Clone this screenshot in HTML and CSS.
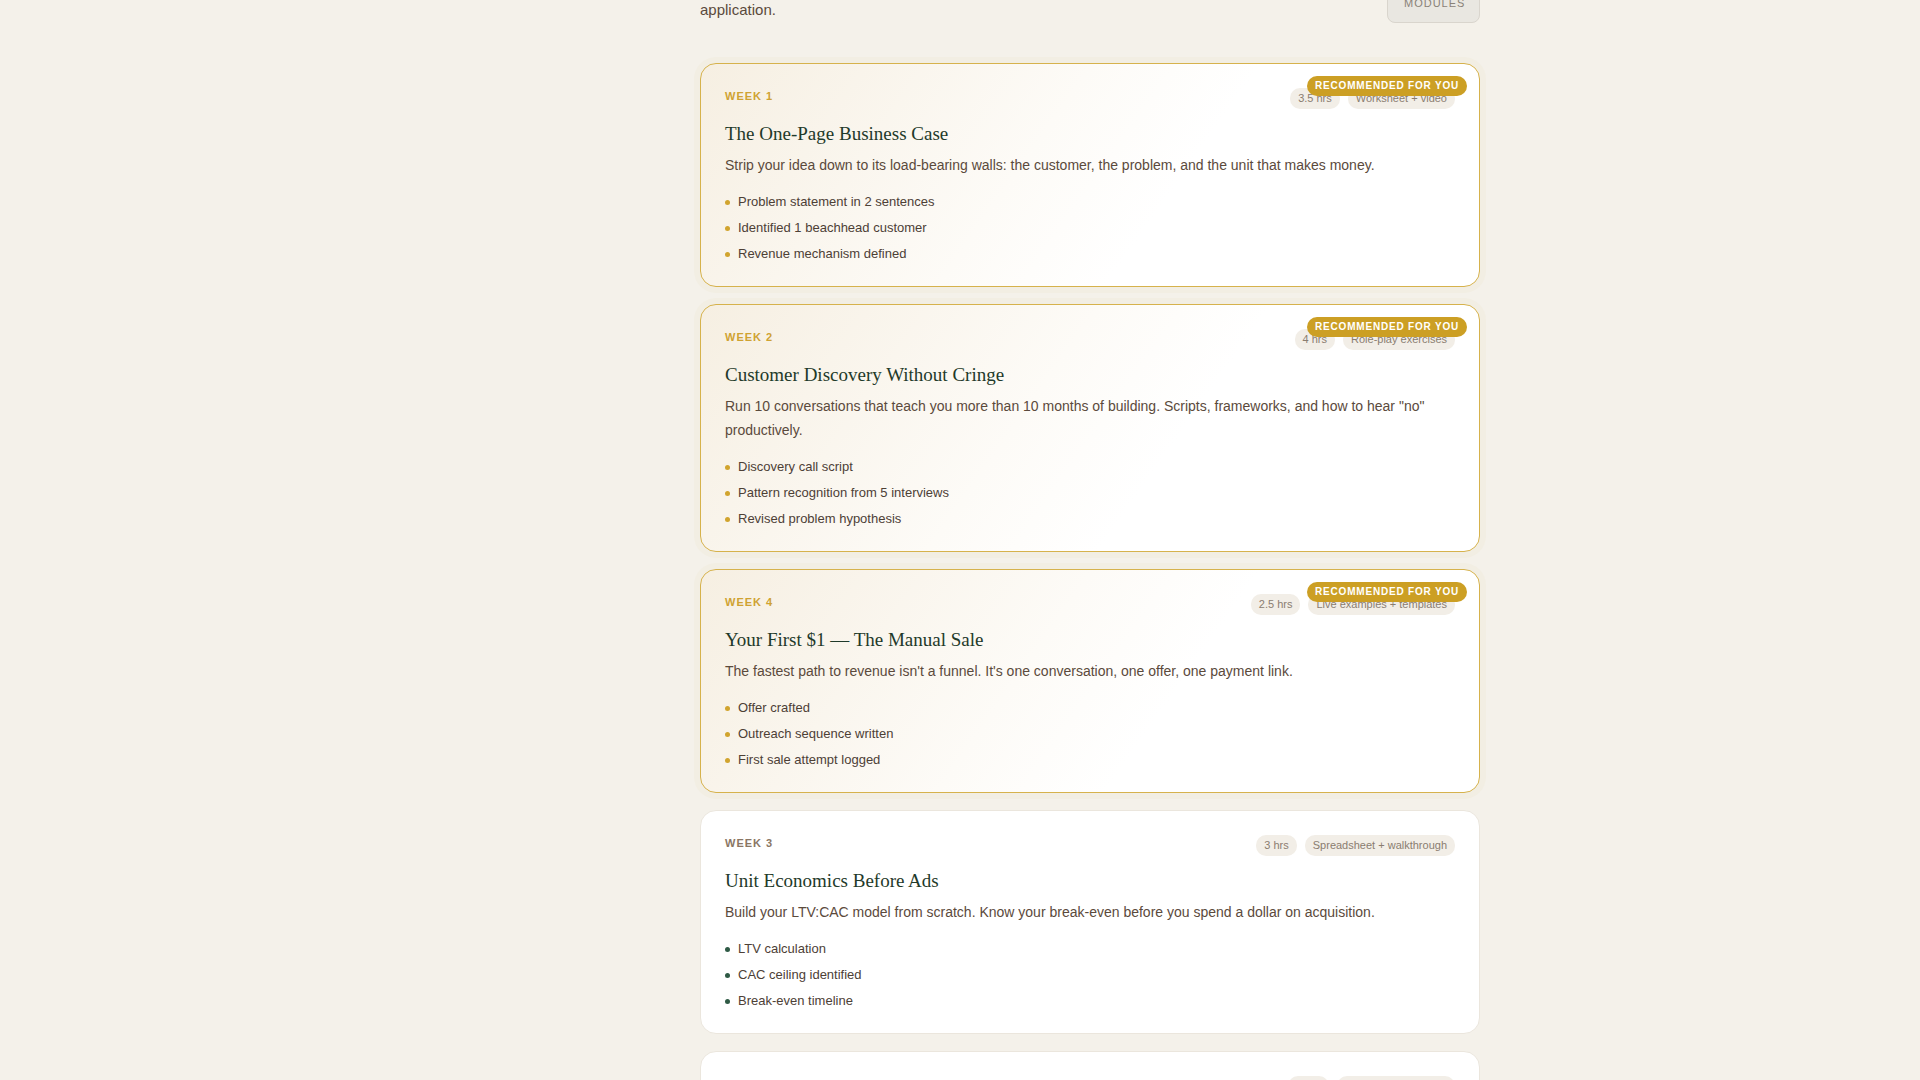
FILE: index.html
```html
<!DOCTYPE html>
<html lang="en">
<head>
<meta charset="utf-8">
<title>Curriculum — Modules</title>
<link rel="stylesheet" href="styles.css">
</head>
<body>
<div class="page">
  <main class="main">
    <header class="intro">
      <p class="intro-text">Each module ends with a concrete deliverable you can drop straight into your accelerator<br>application.</p>
      <button class="modules-btn" type="button">View all<br>modules</button>
    </header>

    <section class="modules">
      <article class="card card--rec">
        <span class="badge">Recommended for you</span>
        <div class="card-head">
          <span class="week">Week 1</span>
          <div class="chips"><span class="chip">3.5 hrs</span><span class="chip">Worksheet + video</span></div>
        </div>
        <h3 class="card-title">The One-Page Business Case</h3>
        <p class="card-desc">Strip your idea down to its load-bearing walls: the customer, the problem, and the unit that makes money.</p>
        <ul class="outcomes">
          <li>Problem statement in 2 sentences</li>
          <li>Identified 1 beachhead customer</li>
          <li>Revenue mechanism defined</li>
        </ul>
      </article>

      <article class="card card--rec">
        <span class="badge">Recommended for you</span>
        <div class="card-head">
          <span class="week">Week 2</span>
          <div class="chips"><span class="chip">4 hrs</span><span class="chip">Role-play exercises</span></div>
        </div>
        <h3 class="card-title">Customer Discovery Without Cringe</h3>
        <p class="card-desc">Run 10 conversations that teach you more than 10 months of building. Scripts, frameworks, and how to hear "no" productively.</p>
        <ul class="outcomes">
          <li>Discovery call script</li>
          <li>Pattern recognition from 5 interviews</li>
          <li>Revised problem hypothesis</li>
        </ul>
      </article>

      <article class="card card--rec">
        <span class="badge">Recommended for you</span>
        <div class="card-head">
          <span class="week">Week 4</span>
          <div class="chips"><span class="chip">2.5 hrs</span><span class="chip">Live examples + templates</span></div>
        </div>
        <h3 class="card-title">Your First $1 — The Manual Sale</h3>
        <p class="card-desc">The fastest path to revenue isn't a funnel. It's one conversation, one offer, one payment link.</p>
        <ul class="outcomes">
          <li>Offer crafted</li>
          <li>Outreach sequence written</li>
          <li>First sale attempt logged</li>
        </ul>
      </article>

      <article class="card">
        <div class="card-head">
          <span class="week">Week 3</span>
          <div class="chips"><span class="chip">3 hrs</span><span class="chip">Spreadsheet + walkthrough</span></div>
        </div>
        <h3 class="card-title">Unit Economics Before Ads</h3>
        <p class="card-desc">Build your LTV:CAC model from scratch. Know your break-even before you spend a dollar on acquisition.</p>
        <ul class="outcomes">
          <li>LTV calculation</li>
          <li>CAC ceiling identified</li>
          <li>Break-even timeline</li>
        </ul>
      </article>

      <article class="card">
        <div class="card-head">
          <span class="week">Week 5</span>
          <div class="chips"><span class="chip">2 hrs</span><span class="chip">Checklist + teardown</span></div>
        </div>
        <h3 class="card-title">Pitching the Traction You Have</h3>
        <p class="card-desc">Turn a handful of real conversations and one sale into a story investors and accelerators believe.</p>
        <ul class="outcomes">
          <li>Traction slide drafted</li>
          <li>Two-minute pitch recorded</li>
          <li>Application submitted</li>
        </ul>
      </article>
    </section>
  </main>
</div>
</body>
</html>
```

FILE: styles.css
```css
* {
  box-sizing: border-box;
}

html, body {
  margin: 0;
  padding: 0;
}

body {
  background: #f4f1ea;
  font-family: "Liberation Sans", Arial, sans-serif;
  color: #5b4a3c;
  overflow: hidden;
}

.page {
  display: grid;
  grid-template-columns: 700px 780px 1fr;
}

.main {
  grid-column: 2;
  margin-top: -29px;
}

.intro {
  display: flex;
  justify-content: space-between;
  align-items: flex-end;
  margin-bottom: 40px;
}

.intro-text {
  margin: 0 0 1px;
  max-width: 660px;
  font-size: 15px;
  line-height: 24px;
  color: #5b4a3c;
  white-space: nowrap;
}

.modules-btn {
  font-family: "Liberation Sans", Arial, sans-serif;
  font-size: 11px;
  line-height: 13px;
  letter-spacing: 1px;
  text-transform: uppercase;
  color: #8a8278;
  background: #e9e7e1;
  border: 1px solid #d9d5cd;
  border-radius: 8px;
  padding: 12px 16px;
  width: 93px;
  text-align: center;
  flex: none;
}

.modules {
  display: flex;
  flex-direction: column;
  gap: 17px;
}

.card {
  position: relative;
  background: #ffffff;
  border: 1px solid #ebe6dd;
  border-radius: 16px;
  padding: 24px 24px 22px;
}

.card--rec {
  border-color: #d6b24c;
  background: linear-gradient(125deg, #f6efe2 0%, #fdfbf7 42%, #ffffff 60%, #ffffff 100%);
  box-shadow: 0 0 0 6px rgba(214, 178, 76, 0.04);
}

.badge {
  position: absolute;
  top: 12px;
  right: 12px;
  background: #cc9f24;
  color: #ffffff;
  font-size: 10px;
  line-height: 12px;
  font-weight: 700;
  letter-spacing: 0.8px;
  text-transform: uppercase;
  padding: 4px 8px;
  border-radius: 10px;
  z-index: 2;
}

.card-head {
  display: flex;
  justify-content: space-between;
  align-items: flex-start;
  margin-bottom: 12px;
}

.week {
  font-size: 11px;
  line-height: 14px;
  font-weight: 700;
  letter-spacing: 1px;
  text-transform: uppercase;
  color: #8a7664;
  padding-top: 1px;
}

.card--rec .week {
  color: #cfa232;
}

.chips {
  display: flex;
  gap: 8px;
}

.chip {
  font-size: 11px;
  line-height: 13px;
  color: #8a7d70;
  background: #f2eee7;
  border-radius: 10px;
  padding: 4px 8px;
}

.card-title {
  margin: 0;
  font-family: "Liberation Serif", "Times New Roman", serif;
  font-weight: 400;
  font-size: 19px;
  line-height: 26px;
  color: #1f3a2a;
}

.card-desc {
  margin: 6px 0 0;
  font-size: 14px;
  line-height: 24px;
  color: #5b4a3c;
}

.outcomes {
  list-style: none;
  margin: 15px 0 0;
  padding: 0;
  display: flex;
  flex-direction: column;
  gap: 6px;
}

.outcomes li {
  display: flex;
  align-items: center;
  gap: 8px;
  font-size: 13px;
  line-height: 20px;
  color: #4d4036;
}

.outcomes li::before {
  content: "";
  width: 5px;
  height: 5px;
  border-radius: 50%;
  background: #2f5a45;
  flex: none;
}

.card--rec .outcomes li::before {
  background: #d1a42e;
}
```
